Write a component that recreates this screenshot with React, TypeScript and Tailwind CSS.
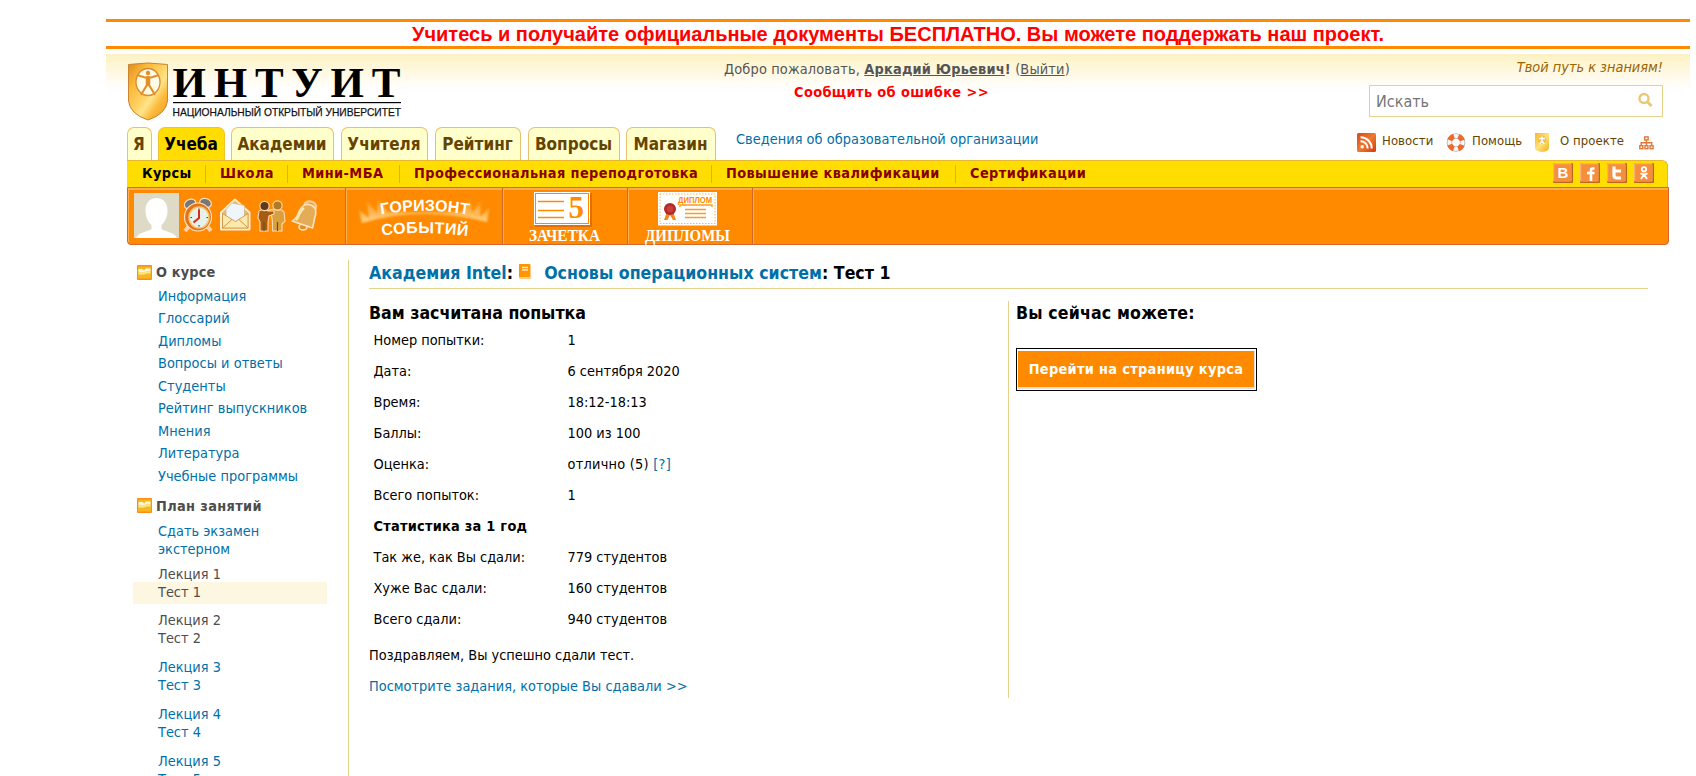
import React from "react";

const tabs: { label: string; cls: string; active?: boolean }[] = [
  { label: "Я", cls: "w-[25px] mr-[6px]" },
  { label: "Учеба", cls: "w-[67px] mr-[6px]", active: true },
  { label: "Академии", cls: "w-[103px] mr-[7px]" },
  { label: "Учителя", cls: "w-[87px] mr-[7px]" },
  { label: "Рейтинг", cls: "w-[86px] mr-[7px]" },
  { label: "Вопросы", cls: "w-[92px] mr-[6px]" },
  { label: "Магазин", cls: "w-[90px]" },
];

const menu: { label: string; cls: string }[] = [
  { label: "Курсы", cls: "w-[78px] text-black" },
  { label: "Школа", cls: "w-[82px] text-[#880000]" },
  { label: "Мини-МБА", cls: "w-[112px] text-[#880000]" },
  { label: "Профессиональная переподготовка", cls: "w-[312px] text-[#880000]" },
  { label: "Повышение квалификации", cls: "w-[244px] text-[#880000]" },
  { label: "Сертификации", cls: "w-[144px] text-[#880000]" },
];

const course = ["Информация", "Глоссарий", "Дипломы", "Вопросы и ответы", "Студенты", "Рейтинг выпускников", "Мнения", "Литература", "Учебные программы"];

const results: [string, React.ReactNode][] = [
  ["Номер попытки:", "1"],
  ["Дата:", "6 сентября 2020"],
  ["Время:", "18:12-18:13"],
  ["Баллы:", "100 из 100"],
  ["Оценка:", <span className="tracking-[0.25px]">отлично (5) <a className="text-[#0070a8]">[?]</a></span>],
  ["Всего попыток:", "1"],
];

const stats: [string, string][] = [
  ["Так же, как Вы сдали:", "779 студентов"],
  ["Хуже Вас сдали:", "160 студентов"],
  ["Всего сдали:", "940 студентов"],
];

function Logo() {
  return (
    <svg width="290" height="66" viewBox="126 54 290 66" className="block shrink-0 overflow-visible">
      <defs>
        <linearGradient id="shield" x1="0" y1="0" x2="1" y2="1">
          <stop offset="0" stopColor="#e08a20" />
          <stop offset=".25" stopColor="#fbb93a" />
          <stop offset=".5" stopColor="#ffd466" />
          <stop offset=".6" stopColor="#ffe48a" />
          <stop offset=".75" stopColor="#fcb93a" />
          <stop offset="1" stopColor="#ee9a1c" />
        </linearGradient>
      </defs>
      <path d="M128.500 64.500Q148 61.500 167.500 64.500V101Q166 114 148 120Q130 114 128.500 101Z" fill="url(#shield)" stroke="#c9852f" strokeWidth="1" />
      <ellipse cx="148" cy="82" rx="12" ry="13.500" fill="#fffbe8" stroke="#d98a2a" strokeWidth="1.300" />
      <g stroke="#e39028" strokeWidth="2.200" fill="none" strokeLinecap="round">
        <path d="M138.500 75.500L145 77.500H151L157.500 75.500" />
        <path d="M148 78V84" strokeWidth="4.500" />
        <path d="M147 85L141.500 94M149 85L154.500 94" />
      </g>
      <circle cx="148" cy="73" r="2.200" fill="#e39028" />
      <text x="172.500" y="97" textLength="228" lengthAdjust="spacing" fontFamily="Liberation Serif" fontWeight="700" fontSize="43" fill="#000">ИНТУИТ</text>
      <rect x="173" y="102" width="228" height="1.200" fill="#000" />
      <text x="172.500" y="115.500" textLength="228.500" lengthAdjust="spacingAndGlyphs" fontFamily="Liberation Sans" fontSize="11.500" fill="#111" stroke="#111" strokeWidth=".25">НАЦИОНАЛЬНЫЙ ОТКРЫТЫЙ УНИВЕРСИТЕТ</text>
    </svg>
  );
}

function RssIcon() {
  return (
    <svg width="19" height="19" viewBox="0 0 19 19">
      <defs>
        <linearGradient id="rss" x1="0" y1="0" x2="1" y2="1">
          <stop offset="0" stopColor="#d8481a" />
          <stop offset=".5" stopColor="#f07830" />
          <stop offset="1" stopColor="#d03c10" />
        </linearGradient>
      </defs>
      <rect width="19" height="19" rx="1.500" fill="url(#rss)" />
      <circle cx="5.200" cy="13.800" r="1.700" fill="#fff" />
      <path d="M3.500 8.300a7 7 0 0 1 7.200 7.200M3.500 4.300a11 11 0 0 1 11.200 11.200" fill="none" stroke="#fff" strokeWidth="2" />
    </svg>
  );
}

function HelpIcon() {
  return (
    <svg width="20" height="19" viewBox="0 0 20 19">
      <circle cx="10" cy="9.500" r="6.600" fill="none" stroke="#b5b5b5" strokeWidth="5.400" />
      <circle cx="10" cy="9.500" r="6.600" fill="none" stroke="#f6f6f6" strokeWidth="3.800" />
      <circle cx="10" cy="9.500" r="6.600" fill="none" stroke="#f0682c" strokeWidth="5.200" strokeDasharray="6 4.367" strokeDashoffset="3" transform="rotate(45 10 9.500)" />
    </svg>
  );
}

function AboutIcon() {
  return (
    <svg width="14" height="19" viewBox="0 0 14 19">
      <defs>
        <linearGradient id="about" x1="0" y1="0" x2="1" y2="1">
          <stop offset="0" stopColor="#f9b52c" />
          <stop offset=".5" stopColor="#ffe27a" />
          <stop offset="1" stopColor="#f2ae18" />
        </linearGradient>
      </defs>
      <path d="M0 0H14V15Q13.500 18.500 7 19Q.5 18.500 0 15Z" fill="url(#about)" />
      <circle cx="7" cy="6.800" r="4.300" fill="#f3c04a" />
      <path d="M4 5.500H10M7 3.500V8M7 8L4.800 11M7 8L9.200 11" stroke="#fff" strokeWidth="1.300" fill="none" />
    </svg>
  );
}

function SitemapIcon() {
  return (
    <svg width="15" height="14" viewBox="0 0 15 14" className="mt-[2px]" fill="none" stroke="#e07838" strokeWidth="1.400">
      <rect x="5.700" y=".9" width="3.400" height="3" />
      <path d="M7.400 4V9M2.200 9V6.700H12.700V9" />
      <rect x=".8" y="9.700" width="3" height="3" />
      <rect x="5.900" y="9.700" width="3" height="3" />
      <rect x="11.100" y="9.700" width="3" height="3" />
    </svg>
  );
}

function Social({ children }: { children: React.ReactNode }) {
  return (
    <svg width="20" height="20" viewBox="0 0 20 20">
      <rect width="20" height="20" rx="1" fill="#c0651c" />
      <rect x="0" y="0" width="18.500" height="18.500" rx="1" fill="#f9b070" />
      <rect x="1.200" y="1.200" width="17" height="17" fill="#f58f3c" />
      {children}
    </svg>
  );
}

function FolderIcon() {
  return (
    <svg width="15" height="15" viewBox="0 0 15 15" className="shrink-0">
      <rect width="15" height="15" rx="1" fill="#ff8c1a" />
      <rect x="1" y="1.500" width="13" height="12" fill="#f5b820" />
      <path d="M1.500 4H5.500L7 5.500L9 3.500H13.500V6.500H9L7.500 7.500H1.500Z" fill="#fff8d8" />
      <path d="M1.500 7.500H7.500L9 6.500H13.500V8.500H9L7.500 9.500H1.500Z" fill="#ffe88a" />
    </svg>
  );
}

function StatusIcons() {
  return (
    <svg width="188" height="48" viewBox="134 192 188 48" className="block">
      <rect x="134" y="193" width="45" height="45" fill="#dedac6" />
      <path d="M156.500 198c7 0 11 5 11 12.500 0 7-3 12-6 14.500v4c4 3 13 3 15.500 9H136c2.500-6 11.500-6 15.500-9v-4c-3-2.500-6-7.500-6-14.500 0-7.500 4-12.500 11-12.500z" fill="#fff" />
      <g stroke="#ffe3c4" strokeWidth="1.200">
        <ellipse cx="190" cy="204" rx="6" ry="4.500" fill="#777" transform="rotate(-30 190 204)" />
        <ellipse cx="205.500" cy="203" rx="6" ry="4.500" fill="#777" transform="rotate(20 205.500 203)" />
        <path d="M189 226l-4 5M207 226l4 5" stroke="#ffd2a0" strokeWidth="4" />
        <ellipse cx="198" cy="217" rx="13.500" ry="14" fill="#e2731c" />
      </g>
      <ellipse cx="199" cy="217.500" rx="10" ry="10.500" fill="#e6f1ea" stroke="#f7c46a" strokeWidth="1.500" />
      <path d="M199 210V218L193.500 222.500" stroke="#d92a20" strokeWidth="2" fill="none" />
      <path d="M199 208.500v1.500M199 225v1.500M190.500 217.500h1.500M206.500 217.500h1.500" stroke="#444" strokeWidth="1.200" />
      <g strokeLinejoin="round">
        <path d="M221 212.500L235 199.500L249.500 212.500V229.500H221Z" fill="#e9b964" stroke="#ffe9d0" strokeWidth="2" />
        <path d="M226 209.500L232 203L244.500 205.500V217L235 222L226 217Z" fill="#eef6fb" stroke="#c9b48c" strokeWidth=".7" />
        <path d="M222.500 213.500L235.500 221.500L248 213.500V228H222.500Z" fill="#fbe9ae" stroke="#c98f3a" strokeWidth=".8" />
        <path d="M222.500 228L232 219.500M248 228L239 219.500" stroke="#c98f3a" strokeWidth=".9" />
      </g>
      <g stroke="#ffd9ae" strokeWidth="1.100" strokeLinejoin="round">
        <path d="M267 211q6-3 10-1 5-1 7 2l1 9-3 3v7h-9.500v-9l-1-7-4 1z" fill="#d9a040" />
        <path d="M259 211q5-3 9 0l6 0 0 3-5 2-1 6v9h-8v-9l-2-4z" fill="#a85c12" />
        <circle cx="264.500" cy="206" r="4.600" fill="#5e3a18" />
        <circle cx="277.500" cy="205.500" r="4.600" fill="#b07a26" />
      </g>
      <path d="M264 222v9M277.500 222v9" stroke="#7a4a18" strokeWidth="1.200" />
      <g stroke="#ffe3bd" strokeWidth="1.600" strokeLinejoin="round">
        <path d="M304.500 205q1-4 6-3.500q5 1 5.500 5l-1.500 4" fill="none" stroke="#f8c890" strokeWidth="2.600" />
        <ellipse cx="303" cy="227" rx="4" ry="3" fill="#d99030" />
        <path d="M315.500 209q1 5-1 10-1 5-2 9L292 221q4-2 6-7 3-8 8-9.500 6-1 9.500 4.500z" fill="#e5ac58" />
      </g>
      <path d="M304 208q-4 3-6 9l-2 3" stroke="#fde8b0" strokeWidth="2.600" fill="none" />
    </svg>
  );
}

function Horizon() {
  return (
    <svg width="130" height="48" viewBox="359 192 130 48" className="block overflow-visible">
      <defs>
        <linearGradient id="rays" x1="0" y1="0" x2="0" y2="1">
          <stop offset="0" stopColor="#ffd890" stopOpacity="0" />
          <stop offset=".5" stopColor="#ffe0a0" stopOpacity=".6" />
          <stop offset="1" stopColor="#fff0b8" />
        </linearGradient>
        <filter id="soft" x="-10%" y="-10%" width="120%" height="120%"><feGaussianBlur stdDeviation=".8" /></filter>
      </defs>
      <path d="M362 223L359 210L369 218L366 200L377 213L377 197L388 212H462L471 197L472 213L481 200L480 217L489 208L487 222Q455 214 424 214Q392 214 362 223Z" fill="url(#rays)" opacity=".75" filter="url(#soft)" />
      <path id="arcTop" d="M381 214.500Q425 207 470 215" fill="none" />
      <path id="arcBottom" d="M382 235.500Q425 230 470 236.500" fill="none" />
      <g fontFamily="Liberation Sans" fontWeight="700" fontSize="16" fill="#fff">
        <text><textPath href="#arcTop" textLength="88">ГОРИЗОНТ</textPath></text>
        <text><textPath href="#arcBottom" textLength="86">СОБЫТИЙ</textPath></text>
      </g>
    </svg>
  );
}

function GradeBook() {
  return (
    <svg width="80" height="54" viewBox="530 191 80 54" className="block overflow-visible">
      <rect x="536" y="193" width="57" height="34" fill="#c85f10" opacity=".6" />
      <rect x="535" y="192" width="56" height="33" fill="#fff" />
      <rect x="536.500" y="193.500" width="53" height="30" fill="#fff" stroke="#ff8a00" />
      <path d="M539 201.500H565M539 210.500H565M539 217.500H565" stroke="#ff8a00" strokeWidth="1.500" />
      <text x="569.500" y="217.500" fontFamily="Liberation Serif" fontWeight="700" fontSize="31" fill="#ff8a00">5</text>
      <text x="530" y="240.500" textLength="71" lengthAdjust="spacingAndGlyphs" fontFamily="Liberation Serif" fontWeight="700" fontSize="17" fill="#ffffff">ЗАЧЕТКА</text>
    </svg>
  );
}

function Diplomas() {
  return (
    <svg width="92" height="54" viewBox="644 191 92 54" className="block overflow-visible">
      <rect x="658" y="192" width="59" height="33.500" fill="#fff" />
      <rect x="660" y="194" width="55" height="29.500" fill="none" stroke="#ffb64a" strokeDasharray="1.500 1.500" />
      <text x="678" y="202.500" textLength="34" lengthAdjust="spacingAndGlyphs" fontFamily="Liberation Sans" fontWeight="700" fontSize="9" fill="#ff8a00">ДИПЛОМ</text>
      <path d="M680 207V205H712V207M685 209.500H706M685 213.500H706M685 217.500H706" stroke="#ff9a20" strokeWidth="1.300" fill="none" />
      <path d="M667 212L664 220H667.500L670 215L673 220H676L673 212Z" fill="#f5861a" />
      <circle cx="670" cy="209" r="6" fill="#b3282a" />
      <circle cx="670" cy="209" r="3.300" fill="#c8403a" />
      <text x="645" y="240.500" textLength="85" lengthAdjust="spacingAndGlyphs" fontFamily="Liberation Serif" fontWeight="700" fontSize="17" fill="#fff">ДИПЛОМЫ</text>
    </svg>
  );
}

function Header() {
  return (
    <header className="h-[106px] bg-[linear-gradient(to_bottom,#fdf1c2_0px,#fff9e6_20px,#ffffff_36px)] pl-[20px] pr-[27px] flex flex-col">
      <div className="flex h-[73px] items-start">
        <Logo />
        <div className="ml-[178px] w-[540px] shrink-0 pt-[6px] leading-[18px] text-[#555555]">
          <div className="ml-[130px] whitespace-nowrap tracking-[0.16px]">
            Добро пожаловать, <b className="underline tracking-[0.2px]">Аркадий Юрьевич</b><b>!</b> (<span className="underline">Выйти</span>)
          </div>
          <div className="ml-[200px] mt-[5px] font-bold tracking-[0.38px] text-[#ff0000]">Сообщить об ошибке &gt;&gt;</div>
        </div>
        <div className="ml-auto w-[294px]">
          <div className="pt-[4px] text-right italic leading-[18px] text-[#996600]">Твой путь к знаниям!</div>
          <div className="mt-[9px] flex h-[32px] items-center justify-between border border-[#e6d28a] bg-white pl-[6px] pr-[9px] text-[16px] text-[#757575]">
            <span className="pt-[2px]">Искать</span>
            <svg width="15" height="17" viewBox="0 0 15 17" className="mb-[1px]" fill="none" stroke="#e8c878">
              <circle cx="6" cy="6.500" r="4.500" strokeWidth="2.400" />
              <path d="M9.500 10L13.500 14" strokeWidth="3" />
            </svg>
          </div>
        </div>
      </div>
      <div className="flex h-[33px]">
        <div className="flex pl-[1px]">
          {tabs.map((t) => (
            <div key={t.label} className={`${t.cls} ${t.active ? "bg-[#ffdd00] text-black border-[#f0c430]" : "bg-[#ffffcc] text-[#664400] border-[#e8c070]"} h-[33px] rounded-t-[7px] border-[1.500px] border-b-0 pr-[1px] text-center text-[17px] font-bold leading-[32px]`}>
              {t.label}
            </div>
          ))}
        </div>
        <div className="ml-[20px] pt-[3px] leading-[18px] tracking-[0.03px] text-[#0070a8]">Сведения об образовательной организации</div>
        <div className="ml-auto mr-[9px] flex items-center pb-[3px] text-[13px] tracking-[0.08px] text-[#664400]">
          <RssIcon />
          <span className="ml-[6px] w-[64px] pb-[3px]">Новости</span>
          <HelpIcon />
          <span className="ml-[6px] w-[63px] pb-[3px]">Помощь</span>
          <AboutIcon />
          <span className="ml-[11px] w-[79px] pb-[3px]">О проекте</span>
          <SitemapIcon />
        </div>
      </div>
    </header>
  );
}

function Toolbar() {
  return (
    <div className="ml-[21px] w-[1542px]">
      <nav className="flex h-[27px] w-[1541px] items-center justify-between rounded-tr-[6px] border-t border-r border-[#e6b830] bg-[#ffdd00] pr-[13px]">
        <div className="flex pl-[1px]">
          {menu.map((m, i) => (
            <span key={m.label} className={`${m.cls} ${i < 5 ? "border-r border-[#e0a840]" : ""} h-[18px] whitespace-nowrap pl-[14px] font-bold leading-[17px] tracking-[0.4px]`}>{m.label}</span>
          ))}
        </div>
        <div className="mb-[3px] flex gap-[7px]">
          <Social><text x="4.500" y="15" fontFamily="Liberation Sans" fontWeight="700" fontSize="15" fill="#fff">B</text></Social>
          <Social><path d="M14.500 5.500H12.500Q11 5.500 11 7.500V18M7 10H14.500" stroke="#fff" strokeWidth="2.600" fill="none" /></Social>
          <Social><path d="M7 3.500V12.500Q7 15 10 15H14M7 8H14" stroke="#fff" strokeWidth="3.200" fill="none" /></Social>
          <Social><g stroke="#fff" strokeWidth="1.800" fill="none"><circle cx="10" cy="6.300" r="2.200" /><path d="M6.500 10.300Q10 12.500 13.500 10.300M10 11.500L7 16M10 11.500L13 16" /></g></Social>
        </div>
      </nav>
      <div className="flex h-[58px] rounded-b-[4px] border border-[#d2682c] bg-[#ff8a00] shadow-[inset_1px_2px_0_#ffae4d]">
        <div className="w-[218px] border-r border-[#d2682c] pl-[6px] pt-[4px]"><StatusIcons /></div>
        <div className="w-[157px] border-l border-r border-l-[#ffae4d] border-r-[#d2682c] pl-[12px] pt-[4px]"><Horizon /></div>
        <div className="w-[125px] border-l border-r border-l-[#ffae4d] border-r-[#d2682c] pl-[25px] pt-[3px]"><GradeBook /></div>
        <div className="w-[125px] border-l border-r border-l-[#ffae4d] border-r-[#d2682c] pl-[15px] pt-[3px]"><Diplomas /></div>
        <div className="border-l border-l-[#ffae4d]" />
      </div>
    </div>
  );
}

function Lecture({ n }: { n: number }) {
  const color = n < 3 ? "text-[#4d4d4d]" : "text-[#0070a8]";
  return (
    <div className={`${color} ${n === 1 ? "mb-[7px]" : "mb-[11px]"} leading-[18px]`}>
      <div className="pl-[25px]">Лекция {n}</div>
      <div className={n === 1 ? "-mt-px h-[22px] bg-[#fdf6e0] pl-[25px] pt-px" : "pl-[25px]"}>Тест {n}</div>
    </div>
  );
}

function Sidebar() {
  return (
    <aside className="w-[243px] shrink-0 border-r border-[#e6d28a] pl-[27px]">
      <div className="flex items-center pl-[4px] pt-[2px] font-bold leading-[19px] tracking-[0.15px] text-[#4d4d4d]"><FolderIcon /><span className="ml-[4px] pt-[1px]">О курсе</span></div>
      <ul className="pt-[2.500px] text-[#0070a8]">
        {course.map((c) => <li key={c} className="h-[22.500px] pl-[25px] leading-[22.500px] tracking-[0.03px]">{c}</li>)}
      </ul>
      <div className="mt-[8.500px] flex items-center pl-[4px] font-bold leading-[19px] tracking-[0.35px] text-[#4d4d4d]"><FolderIcon /><span className="ml-[4px] pt-[1px]">План занятий</span></div>
      <div className="mb-[7px] mt-[6px] pl-[25px] leading-[18px] text-[#0070a8]">Сдать экзамен<br />экстерном</div>
      <div className="w-[194px]">{[1, 2, 3, 4, 5].map((n) => <Lecture key={n} n={n} />)}</div>
    </aside>
  );
}

function Row({ label, value }: { label: string; value: React.ReactNode }) {
  return (
    <div className="flex h-[31px] leading-[30px]">
      <span className="w-[194px]">{label}</span>
      <span>{value}</span>
    </div>
  );
}

function Content() {
  return (
    <main className="ml-[20px] w-[1280px] text-black">
      <h1 className="flex h-[29px] w-[1279px] items-start border-b border-[#e6d28a] text-[17.600px] font-bold leading-[26px]">
        <span className="text-[#0070a8]">Академия Intel</span><span>:</span>
        <svg width="12" height="15" viewBox="0 0 12 15" className="ml-[6px] mt-[4px]">
          <rect width="12" height="15" rx="1" fill="#ffcc80" />
          <rect width="11" height="13" rx="1" fill="#ff9500" />
          <path d="M3 3.500H9M3 6H9" stroke="#ffe9c8" strokeWidth="1.300" />
        </svg>
        <span className="ml-[13px] tracking-[0.02px] text-[#0070a8]">Основы операционных систем</span><span className="whitespace-pre">: Тест 1</span>
      </h1>
      <div className="mt-[12px] flex">
        <section className="w-[640px] border-r border-[#e6d28a] pb-[1px]">
          <h2 className="text-[17.600px] font-bold leading-[24px]">Вам засчитана попытка</h2>
          <div className="pl-[4.500px]">
            {results.map(([l, v]) => <Row key={l} label={l} value={v} />)}
            <div className="h-[31px] font-bold leading-[30px] tracking-[0.25px]">Статистика за 1 год</div>
            {stats.map(([l, v]) => <Row key={l} label={l} value={v} />)}
          </div>
          <p className="mt-[5px] h-[31px] leading-[30px]">Поздравляем, Вы успешно сдали тест.</p>
          <p className="h-[26px] leading-[30px] tracking-[0.02px] text-[#0070a8]">Посмотрите задания, которые Вы сдавали &gt;&gt;</p>
        </section>
        <section className="pl-[7px]">
          <h2 className="text-[17.600px] font-bold leading-[24px] tracking-[0.15px]">Вы сейчас можете:</h2>
          <button className="mt-[23px] block h-[43px] w-[241px] border border-black bg-white p-px">
            <span className="block h-[39px] border-b-2 border-t border-r border-b-[#e0e0e0] border-r-[#e0e0e0] border-t-white bg-[#ff8a00] font-bold leading-[36px] tracking-[0.32px] text-white">Перейти на страницу курса</span>
          </button>
        </section>
      </div>
    </main>
  );
}

export default function App() {
  return (
    <div className="h-[776px] overflow-hidden bg-white pl-[106px] pt-[19px] font-['DejaVu_Sans_Condensed','Noto_Sans',sans-serif] text-[14.400px]">
      <div className="w-[1584px]">
        <div className="mb-[5px] h-[30px] border-y-[3px] border-[#ff8a00] text-center font-['Liberation_Sans',sans-serif] text-[20px] font-bold leading-[24px] text-[#ff0000]">
          Учитесь и получайте официальные документы БЕСПЛАТНО. Вы можете поддержать наш проект.
        </div>
        <Header />
        <Toolbar />
        <div className="mt-[15px] flex h-[516px]">
          <Sidebar />
          <Content />
        </div>
      </div>
    </div>
  );
}
